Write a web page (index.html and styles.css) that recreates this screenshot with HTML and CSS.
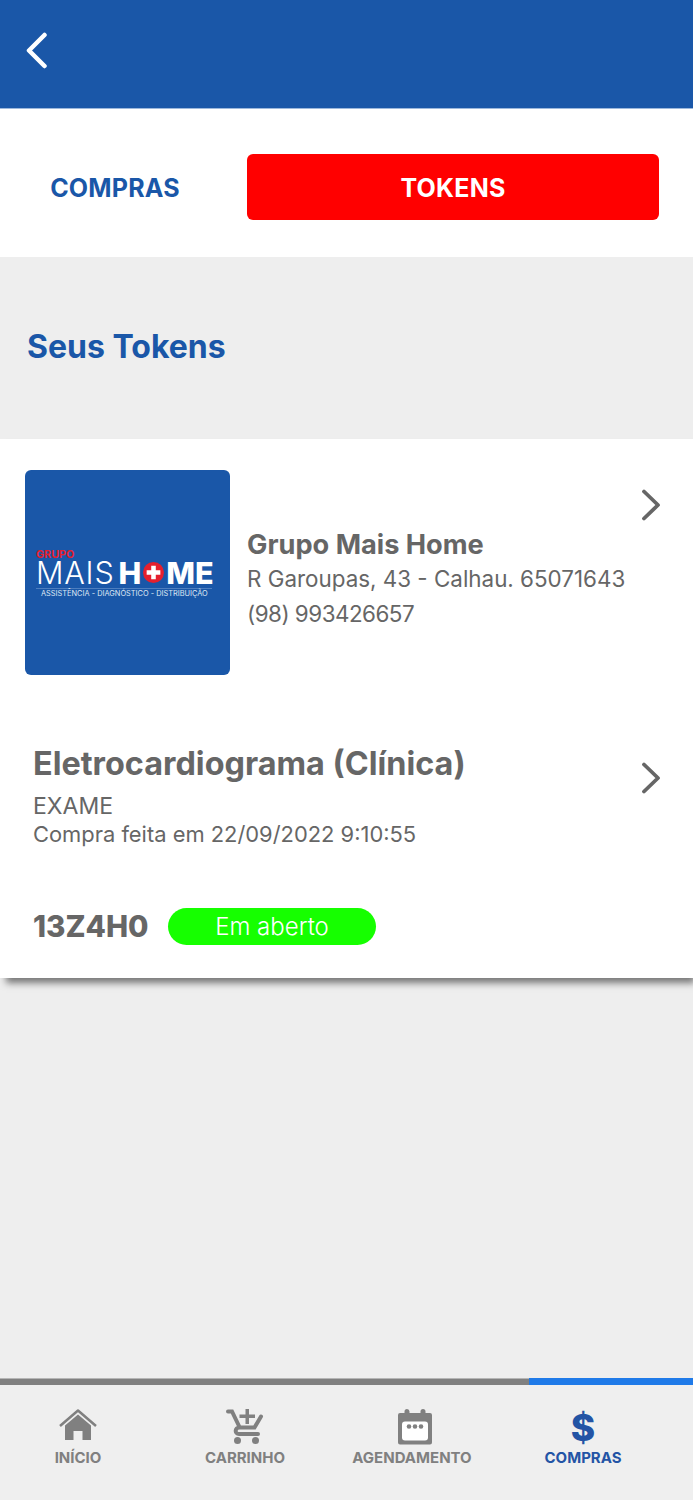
FILE: index.html
```html
<!DOCTYPE html>
<html lang="pt-BR">
<head>
<meta charset="utf-8">
<title>Seus Tokens</title>
<link rel="stylesheet" href="styles.css">
</head>
<body>
<div class="app">
  <header class="topbar">
    <svg class="back" width="24" height="38" viewBox="0 0 24 38"><path d="M20.500 4 L5 19.500 L20.500 35" fill="none" stroke="#fff" stroke-width="4.500" stroke-linecap="round" stroke-linejoin="round"/></svg>
  </header>
  <nav class="tabs">
    <div class="tab">COMPRAS</div>
    <div class="tab tab-active">TOKENS</div>
  </nav>
  <section class="heading"><h1>Seus Tokens</h1></section>
  <section class="card">
    <div class="clinic">
      <div class="logo">
        <div class="logo-inner">
          <div class="logo-grupo">GRUPO</div>
          <div class="logo-main"><span class="logo-light">MAIS</span><span class="logo-bold">H</span><svg class="logo-cross" width="21" height="21" viewBox="0 0 23 23"><circle cx="11.500" cy="11.500" r="11.500" fill="#e5202e"/><path d="M9 4h5v5h5v5h-5v5H9v-5H4V9h5z" fill="#fff"/></svg><span class="logo-bold">ME</span></div>
          <div class="logo-sub">ASSISTÊNCIA - DIAGNÓSTICO - DISTRIBUIÇÃO</div>
        </div>
      </div>
      <div class="clinic-info">
        <div class="clinic-name">Grupo Mais Home</div>
        <div class="clinic-line clinic-address">R Garoupas, 43 - Calhau. 65071643</div>
        <div class="clinic-line clinic-phone">(98) 993426657</div>
      </div>
      <svg class="chev chev-clinic" width="20" height="32" viewBox="0 0 20 32"><path d="M3 2.500 L17 16 L3 29.500" fill="none" stroke="#666" stroke-width="3.800" stroke-linecap="round" stroke-linejoin="round"/></svg>
    </div>
    <div class="exam">
      <div class="exam-text">
        <div class="exam-title">Eletrocardiograma (Clínica)</div>
        <div class="exam-type">EXAME</div>
        <div class="exam-date">Compra feita em 22/09/2022 9:10:55</div>
      </div>
      <svg class="chev" width="20" height="32" viewBox="0 0 20 32"><path d="M3 2.500 L17 16 L3 29.500" fill="none" stroke="#666" stroke-width="3.800" stroke-linecap="round" stroke-linejoin="round"/></svg>
    </div>
    <div class="token-row">
      <div class="token-code">13Z4H0</div>
      <div class="status">Em aberto</div>
    </div>
  </section>
  <div class="spacer"></div>
  <footer class="bottom">
    <div class="progress"><div class="progress-active"></div></div>
    <div class="nav">
      <div class="nav-item">
        <svg width="38" height="36" viewBox="0 0 38 36"><path d="M1 17 L19 1.500 L37 17" fill="none" stroke="#808080" stroke-width="2.500" stroke-linejoin="round"/><path d="M6 16.500 L19 5.500 L32 16.500 V31 H23.500 V22 H14.500 V31 H6 Z" fill="#808080"/></svg>
        <span>INÍCIO</span>
      </div>
      <div class="nav-item">
        <svg width="38" height="36" viewBox="0 0 38 36"><path d="M2 2.500 H6 L13 17" fill="none" stroke="#808080" stroke-width="4" stroke-linecap="round"/><path d="M35 7.500 L28.500 18.500 H13.500 C8.500 18.500 8.500 25 13 25 H32" fill="none" stroke="#808080" stroke-width="4" stroke-linecap="round"/><path d="M19.500 0 h3.500 v5.500 h6 v3.500 h-6 v6 h-3.500 v-6 h-6 v-3.500 h6 z" fill="#808080"/><circle cx="11.500" cy="31.500" r="3.500" fill="#808080"/><circle cx="29.500" cy="31.500" r="3.500" fill="#808080"/></svg>
        <span>CARRINHO</span>
      </div>
      <div class="nav-item">
        <svg class="icon-agenda" width="34" height="36" viewBox="0 0 34 36"><path d="M2 4 H6.500 V2.500 a2.500 2.500 0 0 1 5 0 V4 H22.500 V2.500 a2.500 2.500 0 0 1 5 0 V4 H32 a2 2 0 0 1 2 2 V33.500 a2 2 0 0 1 -2 2 H2 a2 2 0 0 1 -2 -2 V6 a2 2 0 0 1 2 -2 Z" fill="#808080"/><rect x="4" y="12.500" width="26" height="19" rx="3" fill="#fff"/><circle cx="11" cy="17.500" r="2.300" fill="#808080"/><circle cx="17" cy="17.500" r="2.300" fill="#808080"/><circle cx="23" cy="17.500" r="2.300" fill="#808080"/></svg>
        <span>AGENDAMENTO</span>
      </div>
      <div class="nav-item nav-compras">
        <div class="dollar">$</div>
        <span>COMPRAS</span>
      </div>
    </div>
  </footer>
</div>
</body>
</html>
```
FILE: styles.css
```css
* { box-sizing: border-box; }
html, body { margin: 0; padding: 0; }
body { font-family: "Inter", "Noto Sans", sans-serif; background: #eeeeee; }
.app { width: 693px; height: 1500px; display: flex; flex-direction: column; overflow: hidden; }

.topbar { height: 109px; background: #1a57a8; border-bottom: 1px solid #9db8dc; padding: 31px 0 0 24px; flex: none; }
.back { display: block; width: 24px; height: 38px; }

.tabs { height: 148px; background: #fff; display: flex; align-items: flex-start; padding-top: 45px; flex: none; }
.tab { height: 66px; display: flex; align-items: center; justify-content: center; font-size: 25px; line-height: 32px; font-weight: 700; letter-spacing: 0.2px; padding-top: 2px; }
.tab:first-child { width: 230px; color: #1a57a8; }
.tab-active { width: 412px; margin-left: 17px; background: #ff0000; color: #fff; border-radius: 6px; }

.heading { height: 182px; padding: 70px 0 0 27px; flex: none; }
.heading h1 { margin: 0; font-size: 32px; line-height: 40px; font-weight: 700; color: #1a57a8; }

.card { height: 539px; background: #fff; flex: none; box-shadow: 4px 7px 7px -2px rgba(0,0,0,0.5); }
.clinic { display: flex; height: 277px; padding: 31px 0 0 25px; }
.logo { width: 205px; height: 205px; flex: none; background: #1a57a8; border-radius: 6px; display: flex; align-items: center; padding-left: 11px; }
.logo-inner { width: 176px; margin-top: 3px; color: #fff; }
.logo-grupo { font-size: 10.800px; line-height: 9px; font-weight: 700; color: #e5202e; }
.logo-main { display: flex; align-items: center; height: 26px; font-size: 30.500px; line-height: 26px; margin-top: 1px; }
.logo-light { font-weight: 300; letter-spacing: 0.8px; margin-right: 4px; }
.logo-bold { font-weight: 800; }
.logo-cross { flex: none; margin: 0 2px; width: 21px; height: 21px; }
.logo-sub { font-size: 7.400px; line-height: 10px; margin-top: 2px; border-top: 1px solid #4d7ebf; padding-left: 5px; white-space: nowrap; color: #dfe8f4; }

.clinic-info { margin: 58px 0 0 17px; width: 385px; flex: none; color: #666; }
.clinic-name { font-size: 27.200px; line-height: 34px; font-weight: 700; white-space: nowrap; }
.clinic-line { font-size: 22.400px; line-height: 34.500px; white-space: nowrap; }
.clinic-phone { letter-spacing: -0.5px; }
.chev { flex: none; display: block; }
.chev-clinic { margin: 19px 0 0 9px; }

.exam { height: 150px; padding: 0 32px 0 33px; display: flex; justify-content: space-between; }
.exam-text { color: #666; padding-top: 29px; }
.exam-title { font-size: 32.400px; line-height: 38px; font-weight: 700; white-space: nowrap; }
.exam-type { font-size: 23px; line-height: 28px; margin-top: 9px; }
.exam-date { font-size: 21.900px; line-height: 28px; white-space: nowrap; }
.exam .chev { margin-top: 46px; }

.token-row { display: flex; align-items: center; padding-left: 33px; margin-top: 41px; }
.token-code { font-size: 29.600px; line-height: 38px; font-weight: 800; color: #666; width: 135px; flex: none; white-space: nowrap; }
.status { width: 208px; height: 37px; border-radius: 19px; background: #16ff00; color: #fff; display: flex; align-items: center; justify-content: center; font-size: 24px; font-weight: 300; padding-top: 1px; }

.spacer { flex: 1; }

.bottom { height: 122px; flex: none; background: #efefef; }
.progress { height: 7px; background: #808080; position: relative; border-top: 1px solid #b5b5b5; }
.progress-active { position: absolute; top: -1px; bottom: 0; left: 529px; right: 0; background: #1f7ae8; }
.nav { height: 115px; display: grid; grid-template-columns: 156px 178px 156px 186px; }
.nav-item { display: flex; flex-direction: column; align-items: center; padding-top: 24px; color: #808080; font-size: 15px; font-weight: 700; line-height: 20px; }
.nav-item svg { display: block; height: 36px; flex: none; }
.nav-item .icon-agenda { margin-left: 5px; }
.nav-item span { margin-top: 3px; white-space: nowrap; }
.nav-compras { color: #2354a5; }
.dollar { height: 36px; font-size: 37px; line-height: 38px; font-weight: 800; color: #2354a5; }
```
